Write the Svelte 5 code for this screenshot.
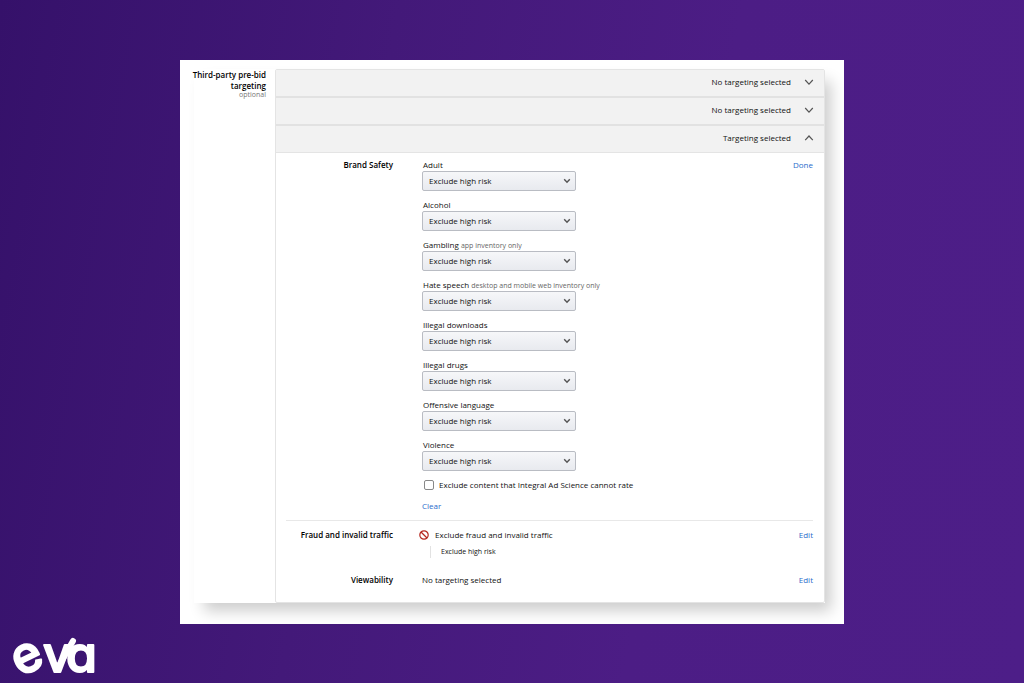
<script lang="ts">
	interface Category {
		id: string;
		name: string;
		note?: string;
	}

	interface Section {
		status: string;
		open: boolean;
	}

	const sections: Section[] = [
		{ status: 'No targeting selected', open: false },
		{ status: 'No targeting selected', open: false },
		{ status: 'Targeting selected', open: true }
	];

	const categories: Category[] = [
		{ id: 'adult', name: 'Adult' },
		{ id: 'alcohol', name: 'Alcohol' },
		{ id: 'gambling', name: 'Gambling', note: 'app inventory only' },
		{ id: 'hate', name: 'Hate speech', note: 'desktop and mobile web inventory only' },
		{ id: 'downloads', name: 'Illegal downloads' },
		{ id: 'drugs', name: 'Illegal drugs' },
		{ id: 'language', name: 'Offensive language' },
		{ id: 'violence', name: 'Violence' }
	];

	let excludeUnrated = $state(false);
</script>

{#snippet chevron(open: boolean)}
	<svg class="chevron" width="10" height="8" viewBox="0 0 10 8" aria-hidden="true">
		<path d={open ? 'M1.2 6.2 5 2l3.8 4.2' : 'M1.2 2 5 6.2 8.8 2'} />
	</svg>
{/snippet}

<div class="page">
	<main class="card">
		<div class="panel">
			<div class="field-label">
				<h1>Third-party pre-bid<br />targeting</h1>
				<span class="optional">optional</span>
			</div>

			<div class="accordion">
				{#each sections as section}
					<button class="section" type="button" aria-expanded={section.open}>
						<span>{section.status}</span>
						{@render chevron(section.open)}
					</button>
				{/each}

				<div class="content">
					<section class="group">
						<h2>Brand Safety</h2>
						<div class="value">
							{#each categories as cat}
								<div class="category">
									<label for={cat.id}>
										{cat.name}
										{#if cat.note}<small>{cat.note}</small>{/if}
									</label>
									<div class="select">
										<select id={cat.id}>
											<option>Exclude high risk</option>
										</select>
										<svg width="8" height="6" viewBox="0 0 8 6" aria-hidden="true">
											<path d="M1.2 1.3 4 4.3l2.8-3" />
										</svg>
									</div>
								</div>
							{/each}
							<label class="check">
								<input type="checkbox" bind:checked={excludeUnrated} />
								Exclude content that Integral Ad Science cannot rate
							</label>
							<a class="clear" href="#clear">Clear</a>
						</div>
						<a href="#done">Done</a>
					</section>

					<section class="group fraud">
						<h2>Fraud and invalid traffic</h2>
						<div class="value">
							<div class="excluded">
								<svg width="10" height="10" viewBox="0 0 10 10" aria-hidden="true">
									<circle cx="5" cy="5" r="4.2" />
									<path d="M2 2l6 6" />
								</svg>
								Exclude fraud and invalid traffic
							</div>
							<div class="detail">Exclude high risk</div>
						</div>
						<a href="#edit-fraud">Edit</a>
					</section>

					<section class="group">
						<h2>Viewability</h2>
						<div class="value">No targeting selected</div>
						<a href="#edit-viewability">Edit</a>
					</section>
				</div>
			</div>
		</div>
	</main>

	<footer>
		<svg class="logo" width="100" height="50" viewBox="0 0 100 50">
			<text x="8 31 54" y="44 39 39" rotate="-26 0 0">eva</text>
			<line x1="45" y1="36" x2="61" y2="8" />
		</svg>
	</footer>
</div>

<style>
	:global(body) {
		margin: 0;
	}

	.page {
		box-sizing: border-box;
		min-height: 100vh;
		display: flex;
		flex-direction: column;
		background: linear-gradient(100deg, #35116a 0%, #431979 35%, #4c1d85 65%, #4d1e88 100%);
		font-family: 'Open Sans', sans-serif;
		font-size: 8px;
		font-weight: 500;
		line-height: 12px;
		color: #111;
	}

	.card {
		margin: 60px 180px 0;
		padding: 9px 19px 21px 14px;
		background: #fff;
	}

	.panel {
		display: grid;
		grid-template-columns: 72px 1fr;
		gap: 9px;
		background: #fff;
		box-shadow: 8px 10px 14px -2px rgba(0, 0, 0, 0.2);
	}

	.field-label {
		display: flex;
		flex-direction: column;
		align-items: flex-end;
		text-align: right;
	}

	h1,
	h2 {
		margin: 0;
		font-size: 8px;
		font-weight: 600;
		color: #000;
	}

	h1 {
		line-height: 11px;
		white-space: nowrap;
	}

	.optional {
		font-size: 7px;
		line-height: 8px;
		font-weight: 400;
		color: #777;
	}

	.accordion {
		border: 1px solid #e4e4e4;
		border-radius: 2px;
	}

	.section {
		box-sizing: border-box;
		width: 100%;
		height: 28px;
		padding: 0 10px 2px;
		display: flex;
		align-items: center;
		justify-content: flex-end;
		gap: 13px;
		border: 0;
		border-bottom: 2px solid #e2e2e2;
		background: #f2f2f2;
		font: inherit;
		color: inherit;
	}

	.section[aria-expanded='true'] {
		height: 27px;
		border-bottom: 1px solid #e4e4e4;
	}

	.chevron path {
		fill: none;
		stroke: #555;
		stroke-width: 1.2;
	}

	.content {
		padding: 6px 11px 16px 10px;
	}

	.group {
		display: grid;
		grid-template-columns: 107px 1fr auto;
		column-gap: 29px;
	}

	h2 {
		text-align: right;
	}

	a {
		color: #2a6bcb;
		text-decoration: none;
	}

	.category {
		margin-bottom: 8px;
	}

	.category label {
		display: block;
		padding-left: 1px;
	}

	small {
		font-size: 7px;
		line-height: 8px;
		font-weight: 400;
		color: #666;
	}

	.select {
		width: 154px;
		display: grid;
		align-items: center;
	}

	.select select,
	.select svg {
		grid-area: 1 / 1;
	}

	.select select {
		box-sizing: border-box;
		height: 20px;
		padding: 0 6px;
		appearance: none;
		border: 1px solid #b9bcc3;
		border-radius: 2px;
		background: linear-gradient(#f6f7f9, #e8eaef);
		font: inherit;
		color: inherit;
	}

	.select svg {
		justify-self: end;
		margin-right: 5px;
		pointer-events: none;
	}

	.select path {
		fill: none;
		stroke: #555;
		stroke-width: 1.4;
	}

	.check {
		display: flex;
		align-items: center;
		gap: 5px;
	}

	.check input {
		box-sizing: border-box;
		width: 10px;
		height: 10px;
		margin: 0 0 0 2px;
		appearance: none;
		border: 1px solid #888;
		border-radius: 2px;
		background: #fff;
	}

	.check input:checked {
		background: #2a6bcb;
	}

	.clear {
		display: block;
		margin-top: 9px;
	}

	.fraud {
		margin: 8px 0 16px;
		padding-top: 8px;
		border-top: 1px solid #e8e8e8;
	}

	.excluded {
		display: flex;
		align-items: center;
		gap: 6px;
		margin-left: -3px;
	}

	.excluded svg {
		fill: none;
		stroke: #b5271f;
		stroke-width: 1.2;
	}

	.detail {
		margin: 5px 0 0 8px;
		padding-left: 10px;
		border-left: 1px solid #e2e2e2;
		font-size: 7px;
	}

	footer {
		margin-top: auto;
		padding: 0 12px;
	}

	.logo {
		display: block;
		overflow: visible;
	}

	.logo text {
		font-family: Inter, sans-serif;
		font-size: 50px;
		font-weight: 500;
		font-feature-settings: 'cv11';
		fill: #fff;
		stroke: #fff;
		stroke-width: 2;
		stroke-linejoin: round;
	}

	.logo line {
		stroke: #fff;
		stroke-width: 6;
		stroke-linecap: round;
	}
</style>
